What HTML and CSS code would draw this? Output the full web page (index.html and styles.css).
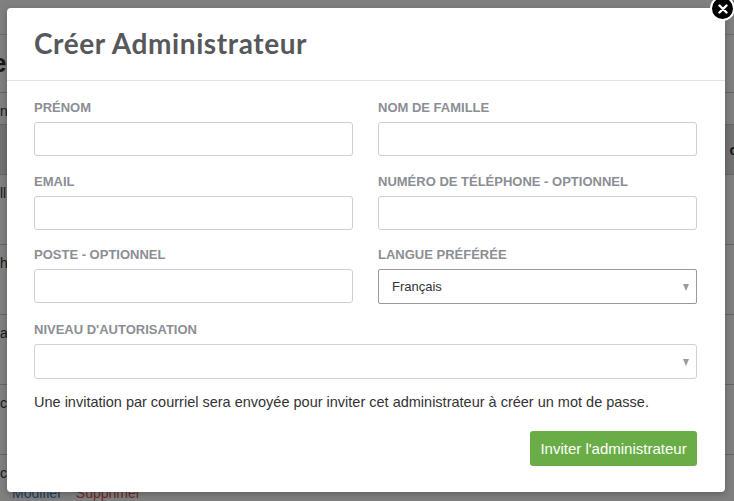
FILE: index.html
```html
<!DOCTYPE html>
<html lang="fr">
<head>
<meta charset="utf-8">
<title>Créer Administrateur</title>
<link rel="stylesheet" href="styles.css">
</head>
<body>
<div class="page">
  <div class="topbar"></div>
  <div class="page-head"><span class="page-title">ea</span></div>
  <div class="row row-short"><span class="cell">n</span></div>
  <div class="row row-band"><span class="cell">&nbsp;</span><span class="cell cell-right">o</span></div>
  <div class="row"><span class="cell">ll</span></div>
  <div class="row"><span class="cell">h</span></div>
  <div class="row"><span class="cell">a</span></div>
  <div class="row"><span class="cell">c</span></div>
  <div class="row row-last"><span class="cell">c</span></div>
  <div class="links"><span class="link-edit">Modifier</span><span class="link-del">Supprimer</span></div>
</div>
<div class="overlay"></div>

<div class="modal">
  <button class="close" type="button" aria-label="Fermer">
    <svg width="10" height="10" viewBox="0 0 10 10"><path d="M1.5 1.5 L8.5 8.5 M8.5 1.5 L1.5 8.5" stroke="#fff" stroke-width="2.4" stroke-linecap="round"/></svg>
  </button>
  <div class="modal-header">
    <h2 class="modal-title">Créer Administrateur</h2>
  </div>
  <div class="modal-body">
    <div class="grid">
      <div class="field">
        <label class="label">Prénom</label>
        <div class="input"></div>
      </div>
      <div class="field">
        <label class="label">Nom de famille</label>
        <div class="input"></div>
      </div>
      <div class="field">
        <label class="label">Email</label>
        <div class="input"></div>
      </div>
      <div class="field">
        <label class="label">Numéro de téléphone - optionnel</label>
        <div class="input"></div>
      </div>
      <div class="field">
        <label class="label">Poste - optionnel</label>
        <div class="input"></div>
      </div>
      <div class="field">
        <label class="label">Langue préférée</label>
        <div class="select select-dark"><span class="select-value">Français</span><span class="arrow"></span></div>
      </div>
      <div class="field field-wide">
        <label class="label">Niveau d'autorisation</label>
        <div class="select select-light"><span class="select-value"></span><span class="arrow"></span></div>
      </div>
    </div>
    <p class="note">Une invitation par courriel sera envoyée pour inviter cet administrateur à créer un mot de passe.</p>
    <div class="actions">
      <button class="btn-primary" type="button">Inviter l'administrateur</button>
    </div>
  </div>
</div>
</body>
</html>
```
FILE: styles.css
```css
* { box-sizing: border-box; }
html, body { margin: 0; padding: 0; }
body {
  width: 734px;
  height: 501px;
  overflow: hidden;
  font-family: "Liberation Sans", Arial, Helvetica, sans-serif;
  background: #fff;
  position: relative;
}

/* background page */
.page { display: flex; flex-direction: column; color: #333; }
.topbar { height: 35px; border-bottom: 1px solid #d6d6d6; background: #fff; }
.page-head { height: 58px; border-bottom: 1px solid #c8c8c8; display: flex; align-items: center; }
.page-title { font-size: 26px; font-weight: 700; margin-left: -8px; }
.row { height: 70px; border-bottom: 1px solid #c8c8c8; display: flex; justify-content: space-between; padding-top: 10px; font-size: 14px; }
.row-short { height: 32px; }
.row-band { height: 50px; background: #e2e2e2; align-items: center; padding-top: 0; }
.row-last { height: 30px; border-bottom: none; }
.cell { display: block; }
.cell-right { margin-right: -4px; font-weight: 700; }
.links { font-size: 14px; padding-left: 12px; display: flex; gap: 14px; }
.link-edit { color: #3b7fc4; }
.link-del { color: #d9534f; }

.overlay { position: absolute; inset: 0; background: rgba(0, 0, 0, 0.5); }

/* modal */
.modal {
  position: absolute;
  left: 7px;
  top: 8px;
  width: 718px;
  background: #fff;
  border-radius: 4px;
  box-shadow: 0 2px 6px rgba(0,0,0,0.25);
}
.close {
  position: absolute;
  right: -10px;
  top: -12px;
  width: 25px;
  height: 25px;
  border-radius: 50%;
  border: 2px solid #fff;
  background: #000;
  padding: 0;
  display: flex;
  align-items: center;
  justify-content: center;
}
.close svg { display: block; }
.modal-header {
  height: 73px;
  border-bottom: 1px solid #dfe3e8;
  padding: 0 27px 2px;
  display: flex;
  align-items: center;
}
.modal-title {
  margin: 0;
  font-family: Lato, "Open Sans", sans-serif;
  font-weight: 700;
  font-size: 28px;
  letter-spacing: 0.6px;
  color: #56585b;
}
.modal-body { padding: 18px 28px 26px 27px; }
.grid {
  display: grid;
  grid-template-columns: 1fr 1fr;
  column-gap: 25px;
}
.field { display: flex; flex-direction: column; margin-bottom: 16.6px; }
.field-wide { grid-column: 1 / span 2; margin-bottom: 0; }
.label {
  font-size: 13px;
  line-height: 17px;
  font-weight: 700;
  text-transform: uppercase;
  color: #8b8e94;
  margin-bottom: 6px;
}
.input {
  height: 34px;
  border: 1px solid #cbd0d6;
  border-radius: 3px;
  background: #fff;
}
.select {
  height: 35px;
  border-radius: 3px;
  display: flex;
  align-items: center;
  justify-content: space-between;
  padding: 0 7px 0 13px;
  font-size: 13px;
  color: #333;
}
.select-dark { border: 1px solid #9a9a9a; border-radius: 2px; }
.select-light { border: 1px solid #cfd3d8; }
.arrow {
  width: 0;
  height: 0;
  border-left: 3.5px solid transparent;
  border-right: 3.5px solid transparent;
  border-top: 7px solid #9c9c9c;
  margin-top: 2px;
}
.note {
  margin: 13px 0 0;
  font-size: 14.5px;
  line-height: 20px;
  color: #333;
}
.actions { display: flex; justify-content: flex-end; margin-top: 19px; }
.btn-primary {
  height: 35px;
  width: 167px;
  border: none;
  border-radius: 3px;
  background: #6aad47;
  color: #fff;
  font-family: "Liberation Sans", Arial, sans-serif;
  font-size: 15px;
  padding: 0;
}
```
